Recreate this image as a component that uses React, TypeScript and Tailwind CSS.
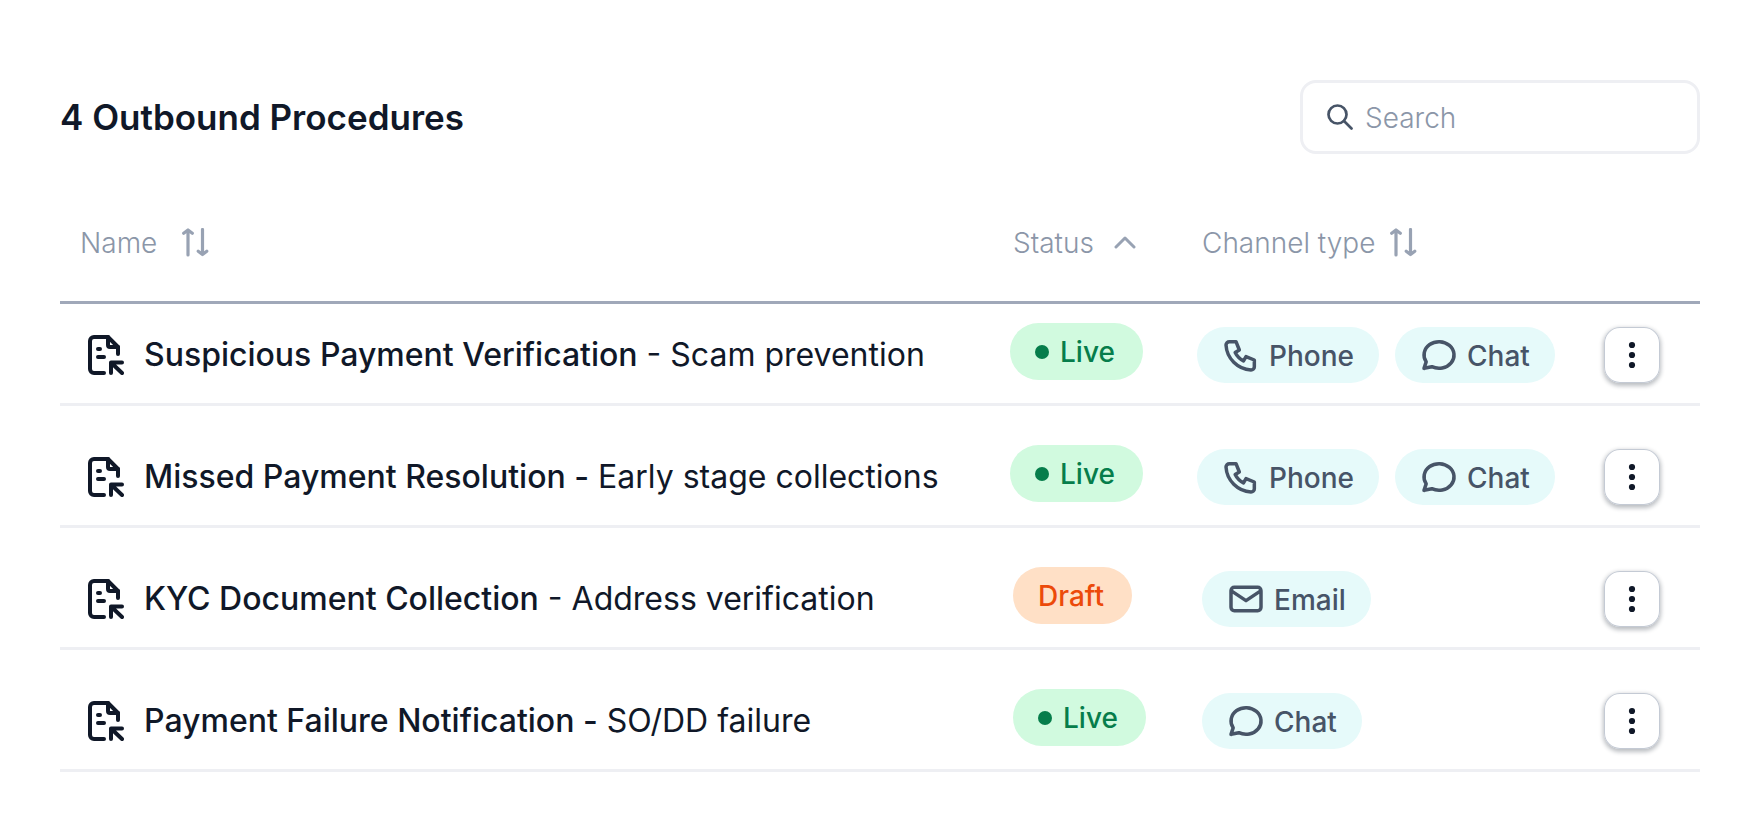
import type { ReactNode } from "react";

type Channel = "Phone" | "Chat" | "Email";

interface Procedure {
  name: string;
  detail: string;
  boldDash: boolean;
  status: "Live" | "Draft";
  channels: Channel[];
}

const procedures: Procedure[] = [
  { name: "Suspicious Payment Verification", detail: "Scam prevention", boldDash: false, status: "Live", channels: ["Phone", "Chat"] },
  { name: "Missed Payment Resolution", detail: "Early stage collections", boldDash: true, status: "Live", channels: ["Phone", "Chat"] },
  { name: "KYC Document Collection", detail: "Address verification", boldDash: false, status: "Draft", channels: ["Email"] },
  { name: "Payment Failure Notification", detail: "SO/DD failure", boldDash: true, status: "Live", channels: ["Chat"] },
];

const channelPaths: Record<Channel, string> = {
  Phone: "M5 4h4l2 5l-2.5 1.5a11 11 0 0 0 5 5l1.5 -2.5l5 2v4a2 2 0 0 1 -2 2a16 16 0 0 1 -15 -15a2 2 0 0 1 2 -2",
  Chat:
    "M3 20l1.3 -3.9c-2.324 -3.437 -1.426 -7.872 2.1 -10.374c3.526 -2.501 8.59 -2.296 11.845 .48c3.255 2.777 3.695 7.266 1.029 10.501c-2.666 3.235 -7.615 4.215 -11.574 2.293l-4.700 1",
  Email: "M3 7a2 2 0 0 1 2 -2h14a2 2 0 0 1 2 2v10a2 2 0 0 1 -2 2h-14a2 2 0 0 1 -2 -2v-10zM3 7l9 6l9 -6",
};

function SortIcon() {
  return (
    <svg viewBox="0 0 28 30" className="h-[30px] w-7" fill="none" stroke="currentColor" strokeWidth="3.200" strokeLinecap="round" strokeLinejoin="round" aria-hidden="true">
      <path d="M7 27V2M2.700 5.300l4.300-3.300 4.300 3.300M21.500 1.500v25M17.200 23.200l4.300 3.300 4.300-3.300" />
    </svg>
  );
}

function ChevronUpIcon() {
  return (
    <svg viewBox="0 0 22 14" className="h-3.5 w-[22px]" fill="none" stroke="currentColor" strokeWidth="3" strokeLinecap="round" strokeLinejoin="round" aria-hidden="true">
      <path d="M2 11l9-9 9 9" />
    </svg>
  );
}

function ProcedureIcon() {
  return (
    <svg viewBox="0 0 36 40" className="h-10 w-9 shrink-0" fill="none" stroke="currentColor" strokeWidth="4" strokeLinecap="round" strokeLinejoin="round" aria-hidden="true">
      <path d="M16 38H6a4 4 0 01-4-4V6a4 4 0 014-4h14l10 10v7" />
      <path d="M20 2v8a2 2 0 002 2h8M10 14h2M10 22h6M23 38V27.500h11M23.500 28L34 38" />
    </svg>
  );
}

function HeaderButton({ label, gap, children }: { label: string; gap: string; children: ReactNode }) {
  return (
    <button type="button" className={`flex items-center text-[28px] leading-9 font-light ${gap}`}>
      <span className="text-[#8b96a8]">{label}</span>
      {children}
    </button>
  );
}

function StatusPill({ status }: { status: Procedure["status"] }) {
  const live = status === "Live";
  return (
    <span
      className={`inline-flex h-[57px] items-center gap-[11px] rounded-full pr-7 pl-[25px] text-[28px] leading-9 font-medium ${
        live ? "bg-[#d1fadf] text-[#067d4b]" : "bg-[#ffe0c6] text-[#ec4a0a]"
      }`}
    >
      {live && <span className="size-3.5 rounded-full bg-[#067d4b]" />}
      {status}
    </span>
  );
}

function ChannelPill({ channel }: { channel: Channel }) {
  return (
    <span className="inline-flex h-14 items-center gap-2 rounded-full bg-[#e6fafa] pr-[25px] pl-6 text-[28px] leading-9 font-medium text-[#475467]">
      <svg viewBox="0 0 24 24" className="size-10" fill="none" stroke="currentColor" strokeWidth="2.100" strokeLinecap="round" strokeLinejoin="round" aria-hidden="true">
        <path d={channelPaths[channel]} />
      </svg>
      <span className="pt-0.5">{channel}</span>
    </span>
  );
}

function ProcedureRow({ procedure, first }: { procedure: Procedure; first: boolean }) {
  const { name, detail, boldDash, status, channels } = procedure;
  const multi = channels.length > 1;
  const cell = "border-b-3 border-[#eeeff3] align-bottom";
  return (
    <tr>
      <td className={`${cell} pb-5 pl-7 ${first ? "pt-[23px]" : "pt-[43px]"}`}>
        <div className="flex h-14 items-center gap-5 text-[32px] leading-10 whitespace-nowrap text-[#101828]">
          <ProcedureIcon />
          <span>
            <span className="font-medium">{name}{boldDash && " -"}</span>
            {!boldDash && " -"} {detail}
          </span>
        </div>
      </td>
      <td className={`${cell} pb-[23px] ${multi ? "" : "pl-[3px]"}`}>
        <div className="flex"><StatusPill status={status} /></div>
      </td>
      <td className={`${cell} pb-5 ${multi ? "" : "pl-[5px]"}`}>
        <div className="flex gap-4">
          {channels.map((channel) => <ChannelPill key={channel} channel={channel} />)}
        </div>
      </td>
      <td className={`${cell} pb-5`}>
        <button
          type="button"
          aria-label={`Actions for ${name}`}
          className="flex size-14 items-center justify-center rounded-2xl bg-white text-[#101828] shadow-[inset_0_0_0_1px_#c4cad4,0_2px_4px_1px_rgba(16,24,40,0.28)]"
        >
          <svg viewBox="0 0 8 28" className="h-7 w-2" fill="currentColor" aria-hidden="true">
            <circle cx="4" cy="4" r="3.100" />
            <circle cx="4" cy="14" r="3.100" />
            <circle cx="4" cy="24" r="3.100" />
          </svg>
        </button>
      </td>
    </tr>
  );
}

export default function App() {
  const headCell = "border-b-3 border-[#a0a8b9] pb-10";
  return (
    <main className="min-h-screen bg-white px-[60px] pt-20 pb-[60px] font-['Inter',sans-serif]">
      <header className="flex items-center justify-between">
        <h1 className="text-[35px] leading-[44px] font-semibold text-[#101828]">4 Outbound Procedures</h1>
        <label className="flex h-[74px] w-[400px] items-center gap-3 rounded-2xl border-3 border-[#eeeff3] px-6 text-[#475467]">
          <svg viewBox="0 0 26 26" className="size-[26px] shrink-0" fill="none" stroke="currentColor" strokeWidth="2.700" strokeLinecap="round" aria-hidden="true">
            <circle cx="10.500" cy="10.500" r="9" />
            <path d="M17 17l7.500 7.500" />
          </svg>
          <input
            type="search"
            aria-label="Search"
            placeholder="Search"
            className="w-full min-w-0 bg-transparent pt-0.5 text-[28px] leading-9 font-light outline-none placeholder:text-[#8b96a8]"
          />
        </label>
      </header>

      <table className="mt-[71px] w-full table-fixed border-separate border-spacing-0 text-left">
        <thead>
          <tr className="text-[#98a2b3]">
            <th className={`${headCell} pl-5`}>
              <HeaderButton label="Name" gap="gap-6"><SortIcon /></HeaderButton>
            </th>
            <th className={`${headCell} w-[187px] pl-[3px]`}>
              <HeaderButton label="Status" gap="gap-5"><ChevronUpIcon /></HeaderButton>
            </th>
            <th className={`${headCell} w-[407px] pl-[5px]`}>
              <HeaderButton label="Channel type" gap="gap-3.5"><SortIcon /></HeaderButton>
            </th>
            <th className={`${headCell} w-24`} aria-label="Actions" />
          </tr>
        </thead>
        <tbody>
          {procedures.map((procedure, index) => (
            <ProcedureRow key={procedure.name} procedure={procedure} first={index === 0} />
          ))}
        </tbody>
      </table>
    </main>
  );
}
